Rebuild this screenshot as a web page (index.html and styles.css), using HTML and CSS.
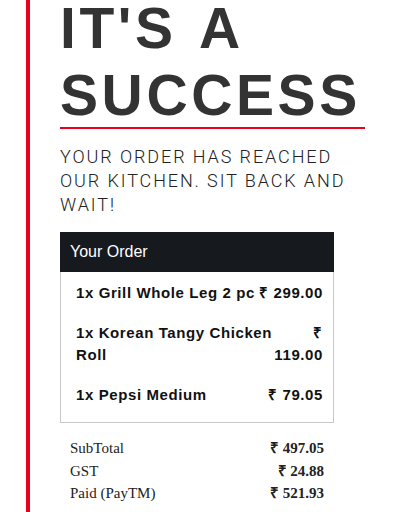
FILE: index.html
```html
<!DOCTYPE html>
<html lang="en">
<head>
	<meta charset="UTF-8">
	<title>Order placed</title>
	<link rel="stylesheet" href="styles.css">
</head>
<body>
	<div class="page">
		<h1 class="title">IT'S A SUCCESS</h1>
		<hr class="rule">
		<p class="lead">Your order has reached our kitchen. Sit back and wait!</p>

		<div class="order">
			<div class="order-head">Your Order</div>
			<div class="order-items">
				<div class="item">
					<span class="item-name">1x Grill Whole Leg 2 pc</span>
					<span class="item-price">₹ 299.00</span>
				</div>
				<div class="item">
					<span class="item-name">1x Korean Tangy Chicken Roll</span>
					<span class="item-price">₹ 119.00</span>
				</div>
				<div class="item">
					<span class="item-name">1x Pepsi Medium</span>
					<span class="item-price">₹ 79.05</span>
				</div>
			</div>
		</div>

		<table class="totals">
			<tr>
				<td>SubTotal</td>
				<td class="amount">₹ 497.05</td>
			</tr>
			<tr>
				<td>GST</td>
				<td class="amount">₹ 24.88</td>
			</tr>
			<tr>
				<td>Paid (PayTM)</td>
				<td class="amount">₹ 521.93</td>
			</tr>
		</table>
	</div>
</body>
</html>
```
FILE: styles.css
```css
body {
	margin: 0;
	font-family: "Liberation Sans", Arial, sans-serif;
	color: #222;
	background: #fff;
}
div.page {
	display: flow-root;
	margin-left: 26px;
	border-left: 4px solid #e8001c;
	padding-left: 30px;
	width: 305px;
	min-height: 100vh;
}
h1.title {
	margin: -5px 0 0;
	font-size: 57px;
	line-height: 67px;
	font-weight: 700;
	letter-spacing: 3.6px;
	word-spacing: 5px;
	color: #333;
}
hr.rule {
	border: 0;
	height: 2px;
	margin: -2px 0 0;
	background: #e8001c;
}
p.lead {
	margin: 16px 0 0;
	font-family: Roboto, "Liberation Sans", sans-serif;
	font-weight: 300;
	font-size: 18px;
	line-height: 24px;
	letter-spacing: 1.9px;
	text-transform: uppercase;
	color: #222;
}
div.order {
	width: 274px;
	margin-top: 15px;
}
div.order-head {
	height: 40px;
	line-height: 40px;
	padding: 0 10px;
	background: #161a1f;
	color: #fff;
	font-size: 16px;
}
div.order-items {
	border: 1px solid #c8c8c8;
	border-top: 0;
	padding: 1px 10px 7px 15px;
}
div.item {
	display: flex;
	justify-content: space-between;
	padding: 9px 0;
	font-size: 15px;
	line-height: 22px;
	font-weight: 700;
	letter-spacing: 0.6px;
	color: #111;
}
span.item-price {
	flex-shrink: 20;
	text-align: right;
}
table.totals {
	width: 254px;
	margin: 14px 0 0 10px;
	border-collapse: collapse;
	font-family: "Liberation Serif", "Times New Roman", serif;
	font-size: 15px;
	line-height: 22.5px;
	color: #222;
}
table.totals td {
	padding: 0;
}
td.amount {
	text-align: right;
	font-weight: 700;
}
```
